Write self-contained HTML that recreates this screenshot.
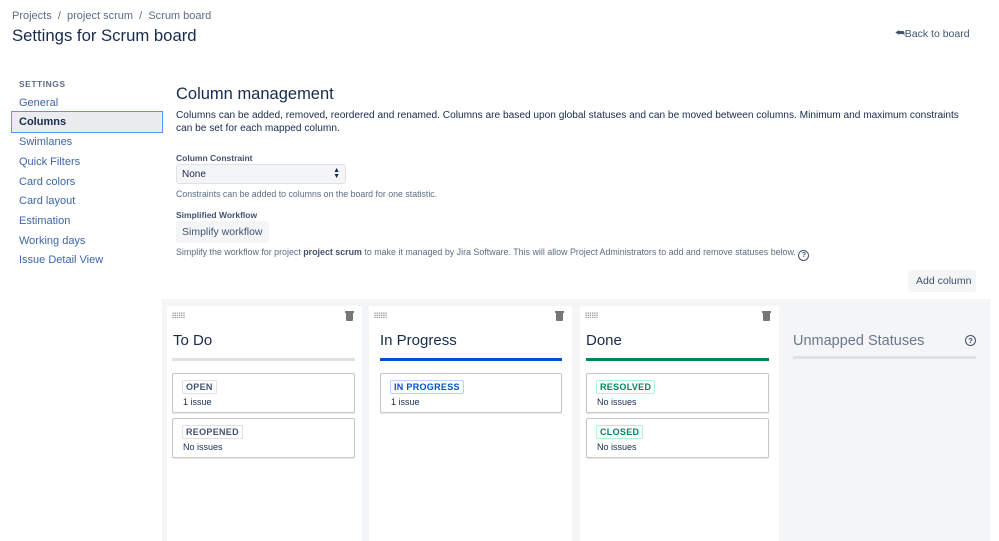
<!DOCTYPE html>
<html><head><meta charset="utf-8"><style>
*{box-sizing:border-box;margin:0;padding:0}
body{width:999px;height:541px;overflow:hidden;background:#fff;font-family:"Liberation Sans",sans-serif;color:#172b4d;position:relative}
.a{position:absolute;white-space:nowrap}
.nav{color:#3d66a8;font-size:11px}
.col{position:absolute;top:306px;height:235px;background:#fff}
.col h3{position:absolute;left:6px;top:26px;font-size:15px;font-weight:normal;color:#172b4d}
.bar{position:absolute;left:5px;right:7px;top:52px;height:3px}
.card{position:absolute;left:5px;right:7px;height:40px;border:1px solid #c4c7cc;border-radius:2px;background:#fff;box-shadow:0 1px 1px rgba(0,0,0,.1)}
.lz{position:absolute;left:9px;top:6px;font-size:9px;font-weight:bold;padding:1px 3px;border:1px solid #dfe1e6;border-radius:2px;color:#42526e;letter-spacing:.3px}
.cnt{position:absolute;left:10px;top:23px;font-size:9px;color:#172b4d}
.grip{position:absolute;left:5px;top:6px;width:13px;height:7px;background-image:radial-gradient(circle,#999 0.7px,transparent 0.8px);background-size:2.2px 2.2px}
.trash{position:absolute;right:9px;top:7px;width:7px;height:8px;background:#777;border-radius:0 0 1px 1px}
.trash:before{content:"";position:absolute;left:-1px;top:-2px;width:9px;height:1.5px;background:#777}
</style></head><body>
<div class="a" style="left:12px;top:10px;font-size:11px;color:#5e6c84">Projects &nbsp;/ &nbsp;project scrum &nbsp;/ &nbsp;Scrum board</div>
<div class="a" style="left:12px;top:26px;font-size:16.7px;color:#172b4d">Settings for Scrum board</div>
<div class="a" style="left:895px;top:28px;font-size:10.5px;color:#42526e">&#11178;Back to board</div>

<div class="a" style="left:19px;top:79px;font-size:8.5px;font-weight:bold;color:#5e6c84;letter-spacing:.5px">SETTINGS</div>
<div class="a nav" style="left:19px;top:97px">General</div>
<div class="a" style="left:11px;top:111px;width:152px;height:22px;background:#ebecf0;border:1px solid #4c9aff"></div>
<div class="a" style="left:19px;top:116px;font-size:11px;font-weight:bold;color:#172b4d">Columns</div>
<div class="a nav" style="left:19px;top:136px">Swimlanes</div>
<div class="a nav" style="left:19px;top:156px">Quick Filters</div>
<div class="a nav" style="left:19px;top:176px">Card colors</div>
<div class="a nav" style="left:19px;top:195px">Card layout</div>
<div class="a nav" style="left:19px;top:215px">Estimation</div>
<div class="a nav" style="left:19px;top:235px">Working days</div>
<div class="a nav" style="left:19px;top:254px">Issue Detail View</div>

<div class="a" style="left:176px;top:85px;font-size:16.5px;color:#172b4d">Column management</div>
<div class="a" style="left:176px;top:109px;font-size:10.15px;line-height:13px;color:#172b4d">Columns can be added, removed, reordered and renamed. Columns are based upon global statuses and can be moved between columns. Minimum and maximum constraints<br>can be set for each mapped column.</div>
<div class="a" style="left:176px;top:153px;font-size:8.5px;font-weight:bold;color:#42526e">Column Constraint</div>
<div class="a" style="left:176px;top:164px;width:170px;height:20px;background:#f4f5f7;border:1px solid #dfe1e6;border-radius:3px;font-size:10px;padding:4px 5px">None<span style="position:absolute;right:5px;top:3px;font-size:7px;line-height:6px">▲<br>▼</span></div>
<div class="a" style="left:176px;top:189px;font-size:8.8px;color:#5e6c84">Constraints can be added to columns on the board for one statistic.</div>
<div class="a" style="left:176px;top:210px;font-size:8.5px;font-weight:bold;color:#42526e">Simplified Workflow</div>
<div class="a" style="left:176px;top:221px;width:93px;height:22px;background:#f4f5f7;border-radius:3px;font-size:10.5px;padding:5px 6px;color:#42526e">Simplify workflow</div>
<div class="a" style="left:176px;top:247px;font-size:8.9px;color:#5e6c84">Simplify the workflow for project <b style="color:#42526e">project scrum</b> to make it managed by Jira Software. This will allow Project Administrators to add and remove statuses below. <span style="display:inline-block;width:11px;height:11px;border:1.3px solid #42526e;border-radius:50%;font-size:7px;text-align:center;line-height:9px;font-weight:bold;color:#42526e;vertical-align:-2px">?</span></div>
<div class="a" style="left:908px;top:270px;width:68px;height:22px;background:#f4f5f7;border-radius:3px;font-size:10.5px;padding:5px 8px;color:#42526e">Add column</div>

<div class="a" style="left:162px;top:299px;width:828px;height:242px;background:#f4f5f7"></div>

<div class="col" style="left:167px;width:195px">
 <div class="grip"></div><div class="trash"></div>
 <h3>To Do</h3><div class="bar" style="background:#dfe1e6"></div>
 <div class="card" style="top:67px"><span class="lz">OPEN</span><span class="cnt">1 issue</span></div>
 <div class="card" style="top:112px"><span class="lz">REOPENED</span><span class="cnt">No issues</span></div>
</div>
<div class="col" style="left:369px;width:203px">
 <div class="grip"></div><div class="trash"></div>
 <h3 style="left:11px">In Progress</h3><div class="bar" style="background:#0052cc;left:11px;right:10px"></div>
 <div class="card" style="top:67px;left:11px;right:10px"><span class="lz" style="color:#0052cc;border-color:#b3d4ff">IN PROGRESS</span><span class="cnt">1 issue</span></div>
</div>
<div class="col" style="left:580px;width:199px">
 <div class="grip"></div><div class="trash"></div>
 <h3>Done</h3><div class="bar" style="background:#00875a;left:6px;right:10px"></div>
 <div class="card" style="top:67px;left:6px;right:10px"><span class="lz" style="color:#00875a;border-color:#abf5d1">RESOLVED</span><span class="cnt">No issues</span></div>
 <div class="card" style="top:112px;left:6px;right:10px"><span class="lz" style="color:#00875a;border-color:#abf5d1">CLOSED</span><span class="cnt">No issues</span></div>
</div>
<div class="a" style="left:793px;top:333px;font-size:14.5px;color:#6b778c">Unmapped Statuses</div>
<div class="a" style="left:965px;top:335px;width:11px;height:11px;border:1.3px solid #42526e;border-radius:50%;font-size:7.5px;text-align:center;line-height:9px;font-weight:bold;color:#42526e">?</div>
<div class="a" style="left:793px;top:356px;width:183px;height:3px;background:#dfe1e6"></div>
</body></html>
